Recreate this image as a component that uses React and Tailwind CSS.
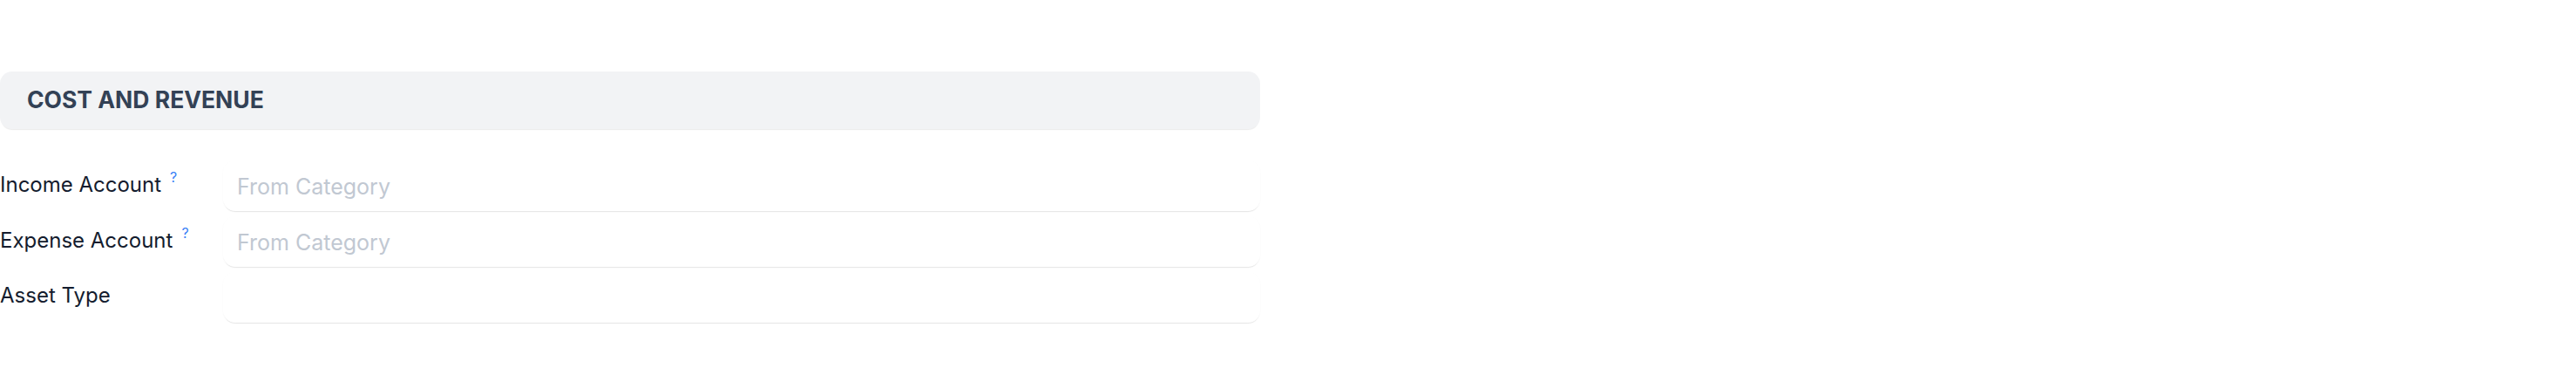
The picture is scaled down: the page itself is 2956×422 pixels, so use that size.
import { useState } from 'react';

// rows of the cost / revenue section
const FIELDS = [
  { label: 'Income Account', help: true, placeholder: 'From Category' },
  { label: 'Expense Account', help: true, placeholder: 'From Category' },
  { label: 'Asset Type', help: false, placeholder: '' },
];

function Field({ field }) {
  const [value, setValue] = useState('');
  return (
    <div className="grid grid-cols-[256px_1fr] items-start h-[58px]">
      <label className="pt-[11px] text-[24px] leading-[32px] text-[#141c2e]">
        {field.label}
        {field.help && (
          <span className="ml-[10px] text-[16px] leading-none text-[#3b82f6] align-[11px]">?</span>
        )}
      </label>
      <input
        value={value}
        onChange={(e) => setValue(e.target.value)}
        placeholder={field.placeholder}
        className="h-[58px] w-full bg-white rounded-[14px] pl-[16px] pt-[2px] text-[25px] text-[#1a2336] placeholder:text-[#c1c8d2] outline-none shadow-[0_2px_1px_-1px_rgba(0,0,0,0.08),0_1px_2px_rgba(0,0,0,0.03)]"
      />
    </div>
  );
}

export default function App() {
  return (
    <div className="min-h-screen bg-white pt-[82px] font-['Inter',sans-serif]">
      <div className="w-[1446px]">
        <div className="h-[66px] flex items-center px-[31px] bg-[#f2f3f5] rounded-[14px] shadow-[0_2px_1px_-1px_rgba(0,0,0,0.08)]">
          <h2 className="text-[26.5px] font-bold text-[#334155]">COST AND REVENUE</h2>
        </div>

        <div className="mt-[36px] flex flex-col gap-[6px]">
          {FIELDS.map((f) => (
            <Field key={f.label} field={f} />
          ))}
        </div>
      </div>
    </div>
  );
}
